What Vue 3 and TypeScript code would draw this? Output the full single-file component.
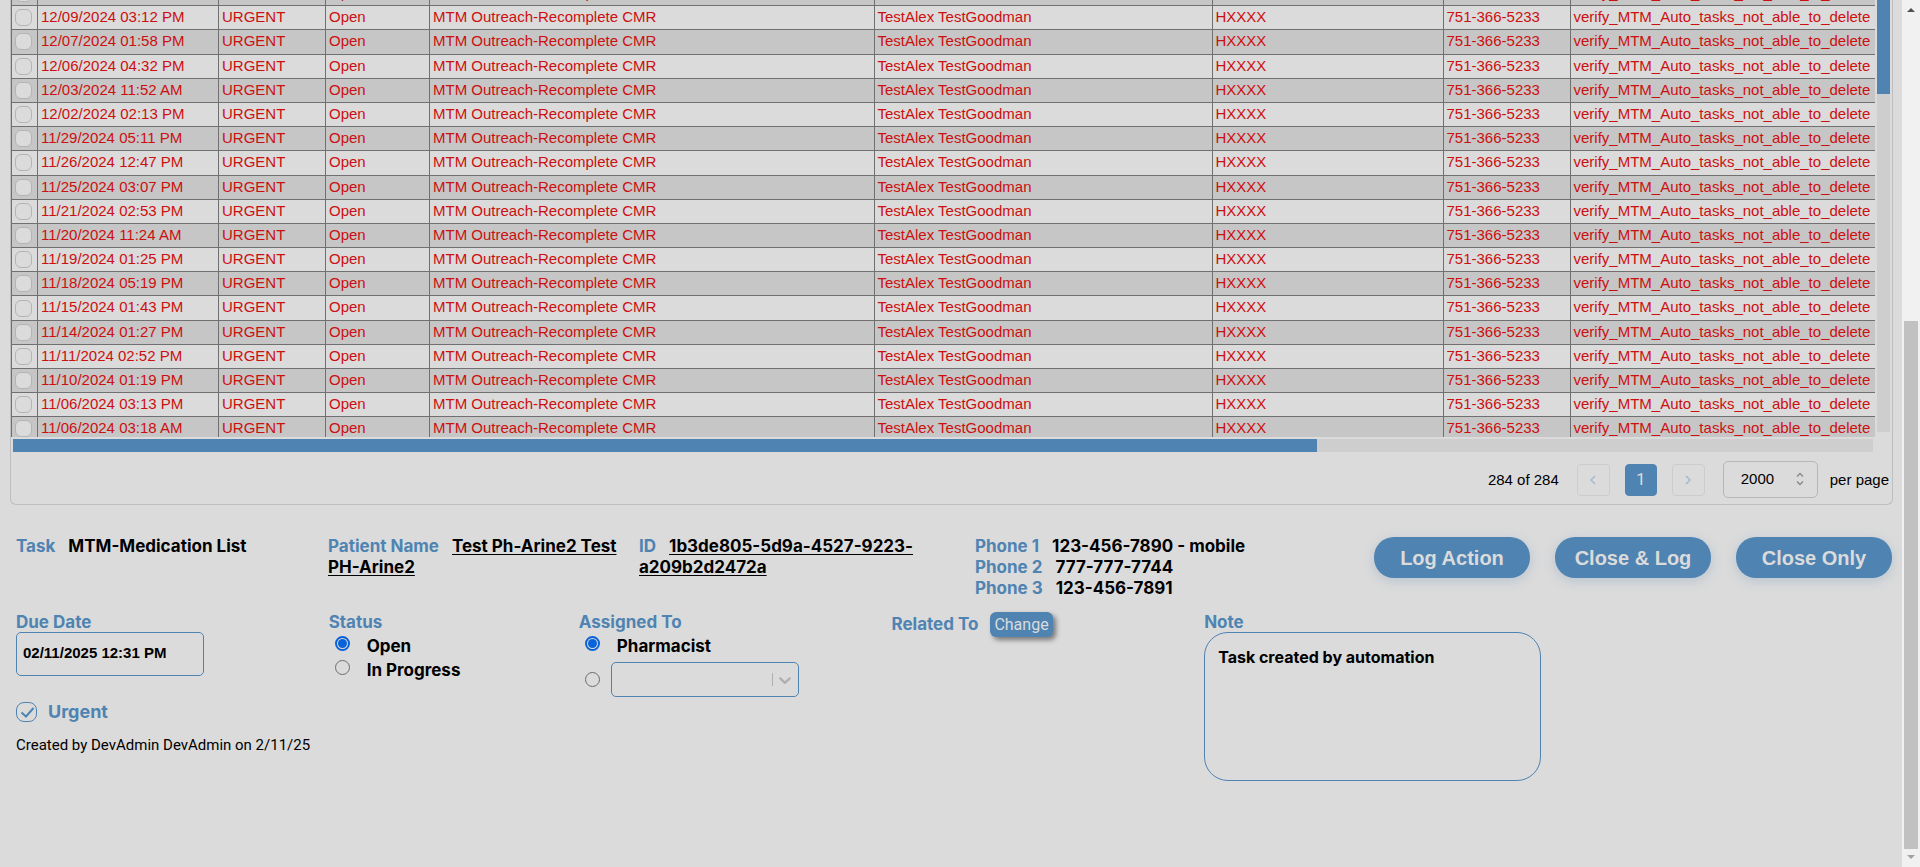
<script setup lang="ts">
import { ref } from 'vue'

interface TaskRow {
  due: string
  selected: boolean
}

const dueDates: string[] = [
  '12/10/2024 02:13 PM',
  '12/09/2024 03:12 PM',
  '12/07/2024 01:58 PM',
  '12/06/2024 04:32 PM',
  '12/03/2024 11:52 AM',
  '12/02/2024 02:13 PM',
  '11/29/2024 05:11 PM',
  '11/26/2024 12:47 PM',
  '11/25/2024 03:07 PM',
  '11/21/2024 02:53 PM',
  '11/20/2024 11:24 AM',
  '11/19/2024 01:25 PM',
  '11/18/2024 05:19 PM',
  '11/15/2024 01:43 PM',
  '11/14/2024 01:27 PM',
  '11/11/2024 02:52 PM',
  '11/10/2024 01:19 PM',
  '11/06/2024 03:13 PM',
  '11/06/2024 03:18 AM',
]

const rows = ref<TaskRow[]>(dueDates.map((due) => ({ due, selected: false })))

const shared: string[] = [
  'URGENT',
  'Open',
  'MTM Outreach-Recomplete CMR',
  'TestAlex TestGoodman',
  'HXXXX',
  '751-366-5233',
  'verify_MTM_Auto_tasks_not_able_to_delete',
]

const phones = [
  { label: 'Phone 1', number: '123-456-7890 - mobile' },
  { label: 'Phone 2', number: '777-777-7744' },
  { label: 'Phone 3', number: '123-456-7891' },
]

const actions: string[] = ['Log Action', 'Close & Log', 'Close Only']

const status = ref('open')
const assignee = ref('pharmacist')
const pageSize = ref('2000')
const person = ref('')
const dueDate = ref('02/11/2025 12:31 PM')
const urgent = ref(true)
const note = ref('Task created by automation')
</script>

<template>
  <div class="page">
    <main class="content">
      <section class="card">
        <div class="grid-area">
          <div class="scroller">
            <table class="tasks">
              <colgroup>
                <col class="c-check" />
                <col class="c-due" />
                <col class="c-priority" />
                <col class="c-status" />
                <col class="c-task" />
                <col class="c-patient" />
                <col class="c-plan" />
                <col class="c-phone" />
                <col class="c-note" />
              </colgroup>
              <tbody>
                <tr v-for="row in rows" :key="row.due">
                  <td class="check-cell">
                    <input v-model="row.selected" type="checkbox" class="tick" :aria-label="row.due" />
                  </td>
                  <td>{{ row.due }}</td>
                  <td v-for="value in shared" :key="value">{{ value }}</td>
                </tr>
              </tbody>
            </table>
          </div>
          <div class="v-track"><div class="v-thumb"></div></div>
        </div>
        <div class="h-track"><div class="h-thumb"></div></div>

        <nav class="pager">
          <span class="count">284 of 284</span>
          <button type="button" class="page-btn" aria-label="Previous page">
            <svg width="16" height="16" viewBox="0 0 16 16"><path d="M10 4L6 8l4 4" fill="none" stroke="#a3bbd2" stroke-width="1.5" /></svg>
          </button>
          <button type="button" class="page-btn current">1</button>
          <button type="button" class="page-btn" aria-label="Next page">
            <svg width="16" height="16" viewBox="0 0 16 16"><path d="M6 4l4 4-4 4" fill="none" stroke="#a3bbd2" stroke-width="1.5" /></svg>
          </button>
          <label class="size">
            <span class="size-box">
              <select v-model="pageSize">
                <option>2000</option>
              </select>
              <svg class="size-icon" width="16" height="16" viewBox="0 0 16 16">
                <path d="M5 5.5l3-3 3 3M5 10.5l3 3 3-3" fill="none" stroke="#83888d" stroke-width="1.3" />
              </svg>
            </span>
            per page
          </label>
        </nav>
      </section>

      <section class="summary">
        <div><span class="name">Task</span><span>MTM-Medication List</span></div>
        <div class="patient"><span class="name">Patient Name</span><a href="#">Test Ph-Arine2 Test PH-Arine2</a></div>
        <div class="ident"><span class="name">ID</span><a href="#">1b3de805-5d9a-4527-9223-a209b2d2472a</a></div>
        <div class="contact">
          <div>
            <div v-for="phone in phones" :key="phone.label">
              <span class="name">{{ phone.label }}</span><span>{{ phone.number }}</span>
            </div>
          </div>
          <div class="actions">
            <button v-for="action in actions" :key="action" type="button">{{ action }}</button>
          </div>
        </div>
      </section>

      <section class="form">
        <div class="due">
          <label class="name" for="due">Due Date</label>
          <input id="due" v-model="dueDate" type="text" />
        </div>
        <fieldset>
          <legend class="name">Status</legend>
          <label class="choice"><input v-model="status" type="radio" name="status" value="open" />Open</label>
          <label class="choice"><input v-model="status" type="radio" name="status" value="progress" />In Progress</label>
        </fieldset>
        <fieldset>
          <legend class="name">Assigned To</legend>
          <label class="choice"><input v-model="assignee" type="radio" name="assignee" value="pharmacist" />Pharmacist</label>
          <div class="other">
            <input v-model="assignee" type="radio" name="assignee" value="other" aria-label="Another person" />
            <span class="person">
              <select v-model="person" aria-label="Person">
                <option value=""></option>
              </select>
              <svg class="person-icon" width="20" height="20" viewBox="0 0 20 20">
                <path
                  fill="#b0b0b0"
                  d="M4.516 7.548c0.436-0.446 1.043-0.481 1.576 0l3.908 3.747 3.908-3.747c0.533-0.481 1.141-0.446 1.574 0 0.436 0.445 0.408 1.197 0 1.615-0.406 0.418-4.695 4.502-4.695 4.502-0.217 0.223-0.502 0.335-0.787 0.335s-0.57-0.112-0.789-0.335c0 0-4.287-4.084-4.695-4.502s-0.436-1.17 0-1.615z"
                />
              </svg>
            </span>
          </div>
        </fieldset>
        <div class="related"><span class="name">Related To</span><button type="button">Change</button></div>
        <div class="note">
          <label class="name" for="note">Note</label>
          <textarea id="note" v-model="note"></textarea>
        </div>

        <div class="foot">
          <label class="urgent">
            <span class="urgent-box">
              <input v-model="urgent" type="checkbox" />
              <svg v-if="urgent" width="15" height="13" viewBox="0 0 15 13"><path d="M1.5 6.500l4.500 4L13.500 2" fill="none" stroke="#4f83b2" stroke-width="2" /></svg>
            </span>
            Urgent
          </label>
          <p>Created by DevAdmin DevAdmin on 2/11/25</p>
        </div>
      </section>
    </main>

    <div class="page-scroll" aria-hidden="true">
      <svg width="10" height="6" viewBox="0 0 10 6"><path d="M1 5L5 1l4 4z" fill="#505050" /></svg>
      <div class="page-rail"><div class="page-thumb"></div></div>
      <svg width="10" height="6" viewBox="0 0 10 6"><path d="M1 1l4 4 4-4z" fill="#a3a3a3" /></svg>
    </div>
  </div>
</template>

<style>
body {
  background: #dbdbdb;
}
</style>

<style scoped>
.page {
  --blue: #4f83b2;
  --line: #bdbec1;
  display: grid;
  grid-template-columns: minmax(0, 1fr) 18px;
  height: 100vh;
  overflow: hidden;
  box-sizing: border-box;
  background: #dbdbdb;
  color: #000;
  font: 700 17px/21px Inter, sans-serif;
}

.page *,
.page *::before {
  box-sizing: border-box;
}

.card {
  margin: 0 9px 0 10px;
  border: 1px solid var(--line);
  border-top: 0;
  border-radius: 0 0 6px 6px;
  font: 400 15px/18px "Liberation Sans", Arial, sans-serif;
}

.grid-area {
  display: flex;
  gap: 2px;
  padding-right: 2px;
}

.scroller {
  flex: 1;
  height: 437px;
  overflow: hidden;
}

.tasks {
  width: 100%;
  margin-top: -19px;
  table-layout: fixed;
  border-collapse: collapse;
  line-height: 1.48;
  color: #cc0f0f;
}

.tasks tr:nth-child(odd) {
  background: #c6c6c6;
}

.tasks td {
  padding: 0 0 1px 3px;
  border: 1px solid #707070;
  white-space: nowrap;
  overflow: hidden;
}

.tasks td:last-child {
  border-right: 0;
}

.tasks .check-cell {
  padding: 0 0 0 3px;
}

.c-check { width: 26px; }
.c-due { width: 181px; }
.c-priority { width: 107px; }
.c-status { width: 104px; }
.c-patient { width: 338px; }
.c-plan { width: 231px; }
.c-phone { width: 127px; }
.c-note { width: 305px; }

.tick {
  display: block;
  appearance: none;
  width: 17px;
  height: 17px;
  margin: 0;
  border: 1px solid #b1b4b8;
  border-radius: 6px;
  background: #dbdbdb;
}

.v-track {
  width: 13px;
  height: 432px;
  background: #cecece;
}

.v-thumb {
  height: 94px;
  background: var(--blue);
}

.h-track {
  height: 13px;
  margin: 2px 19px 0 2px;
  background: #cecece;
}

.h-thumb {
  width: 70.1%;
  height: 100%;
  background: var(--blue);
}

.pager {
  display: flex;
  justify-content: flex-end;
  align-items: center;
  gap: 15px;
  padding: 9px 3px 6px 0;
}

.count {
  margin-right: 3px;
}

.page-btn {
  display: flex;
  align-items: center;
  justify-content: center;
  width: 33px;
  height: 32px;
  padding: 0;
  border: 1px solid #cbccce;
  border-radius: 4px;
  background: transparent;
}

.page-btn.current {
  width: 32px;
  border-color: var(--blue);
  background: var(--blue);
  color: #dbdbdb;
  font: 400 17px/21px Roboto, sans-serif;
}

.size {
  display: flex;
  align-items: center;
  gap: 12px;
  margin-left: 3px;
}

.size-box {
  position: relative;
}

.size-box select {
  display: block;
  appearance: none;
  width: 95px;
  height: 37px;
  padding: 0 17px 1px;
  border: 1px solid #b5b8bb;
  border-radius: 5px;
  background: transparent;
  color: #000;
  font: 400 15px/18px "Liberation Sans", Arial, sans-serif;
}

.size-icon {
  position: absolute;
  right: 10px;
  top: 10px;
  pointer-events: none;
}

.name {
  color: var(--blue);
}

.summary {
  display: grid;
  grid-template-columns: 312fr 311fr 336fr 919fr;
  padding: 31px 8px 0 16px;
}

.summary .name {
  margin-right: 13px;
}

.summary a {
  color: #000;
  text-underline-offset: 2px;
}

.patient {
  padding-right: 4px;
}

.ident {
  padding-right: 40px;
}

.contact {
  display: flex;
  justify-content: space-between;
}

.actions {
  display: flex;
  gap: 25px;
  padding: 1px 2px 0 0;
}

.actions button {
  width: 156px;
  height: 41px;
  padding: 0;
  border: 0;
  border-radius: 20px;
  background: var(--blue);
  box-shadow: 0 3px 12px rgba(79, 131, 178, 0.25);
  color: #dbdbdb;
  font: 700 20px/24px "Liberation Sans", Arial, sans-serif;
}

.form {
  display: grid;
  grid-template-columns: 5fr 4fr 5fr 5fr 11fr;
  grid-template-rows: 89px auto;
  padding: 12px 10px 0 16px;
}

.form .name {
  display: block;
  padding: 0;
}

.due input {
  display: block;
  width: 188px;
  height: 44px;
  padding: 0 6px 3px;
  border: 1px solid var(--blue);
  border-radius: 5px;
  background: transparent;
  color: #000;
  font: 700 15px/18px "Liberation Sans", Arial, sans-serif;
}

fieldset {
  min-width: 0;
  margin: 0;
  padding: 0;
  border: 0;
}

.choice {
  display: flex;
  height: 24px;
  padding: 3px 0 0 6px;
}

.form input[type='radio'] {
  appearance: none;
  flex: none;
  width: 15px;
  height: 15px;
  margin: 0;
  padding: 1px;
  border: 1px solid #6d6d6d;
  border-radius: 50%;
}

.form input[type='radio']:checked {
  border: 2px solid #0862d9;
  background: #0862d9 content-box;
}

.choice input[type='radio'] {
  margin-right: 17px;
}

.other {
  display: flex;
  align-items: center;
  gap: 11px;
  padding: 5px 0 0 6px;
}

.person {
  position: relative;
}

.person::before {
  content: '';
  position: absolute;
  right: 26px;
  top: 11px;
  width: 1px;
  height: 13px;
  background: #b0b0b0;
}

.person select {
  display: block;
  appearance: none;
  width: 188px;
  height: 35px;
  border: 1px solid var(--blue);
  border-radius: 5px;
  background: transparent;
}

.person-icon {
  position: absolute;
  right: 4px;
  top: 8px;
  pointer-events: none;
}

.related {
  display: flex;
  align-items: center;
  gap: 12px;
  align-self: start;
}

.related button {
  height: 25px;
  padding: 0 4px;
  border: 0;
  border-radius: 6px;
  background: var(--blue);
  box-shadow: 3px 3px 5px rgba(0, 0, 0, 0.45);
  color: #dbdbdb;
  font: 400 16px/19px Roboto, sans-serif;
}

.form {
  padding-top: 13px;
}

.due .name,
.note .name {
  line-height: 20px;
}

.note {
  grid-row: 1 / 3;
  grid-column: 5;
}

.note textarea {
  display: block;
  width: 337px;
  height: 149px;
  padding: 14px 13px;
  border: 1px solid var(--blue);
  border-radius: 24px;
  background: transparent;
  color: #000;
  font: 700 16px/21px Inter, sans-serif;
  resize: none;
}

.foot {
  grid-column: 1;
  grid-row: 2;
}

.urgent {
  display: flex;
  align-items: center;
  gap: 11px;
  color: var(--blue);
  font-size: 18px;
}

.urgent-box {
  position: relative;
  width: 21px;
  height: 20px;
}

.urgent-box input {
  display: block;
  appearance: none;
  width: 100%;
  height: 100%;
  margin: 0;
  border: 1px solid var(--blue);
  border-radius: 8px;
}

.urgent-box svg {
  position: absolute;
  left: 4px;
  top: 4px;
  pointer-events: none;
}

.foot p {
  margin: 13px 0 0;
  font: 400 15px/21px Roboto, sans-serif;
  white-space: nowrap;
}

.page-scroll {
  display: flex;
  flex-direction: column;
  align-items: center;
  gap: 5px;
  padding: 7px 0;
  background: #f1f1f1;
}

.page-scroll svg {
  flex: none;
}

.page-rail {
  display: flex;
  flex: 1;
  align-items: flex-end;
}

.page-thumb {
  width: 14px;
  height: 63.5%;
  background: #c1c1c1;
}
</style>
